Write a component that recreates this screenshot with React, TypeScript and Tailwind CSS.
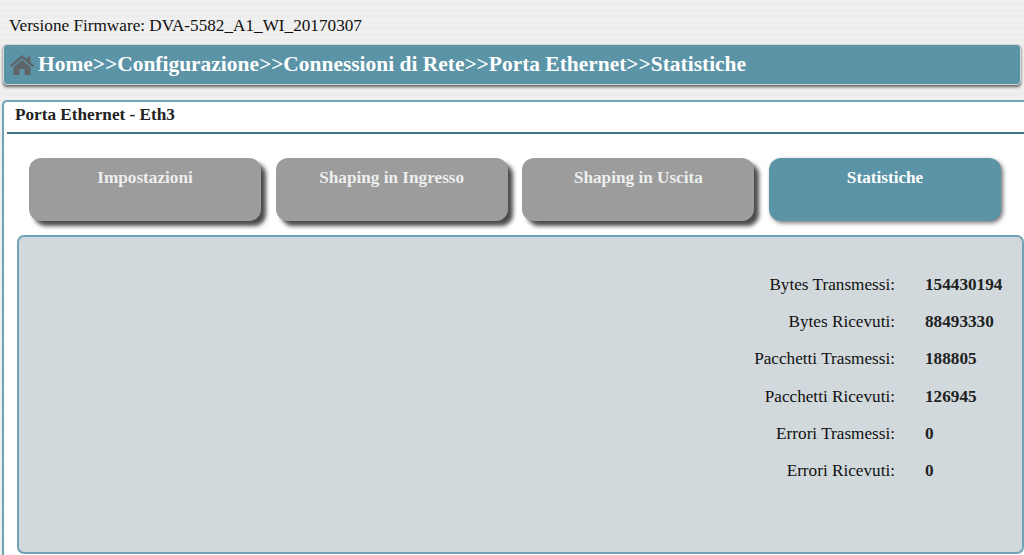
const serif = "font-['Liberation_Serif','Times_New_Roman',serif]";

const tabs = [
  { label: "Impostazioni", active: false },
  { label: "Shaping in Ingresso", active: false },
  { label: "Shaping in Uscita", active: false },
  { label: "Statistiche", active: true },
];

const stats = [
  { label: "Bytes Transmessi:", value: "154430194" },
  { label: "Bytes Ricevuti:", value: "88493330" },
  { label: "Pacchetti Trasmessi:", value: "188805" },
  { label: "Pacchetti Ricevuti:", value: "126945" },
  { label: "Errori Trasmessi:", value: "0" },
  { label: "Errori Ricevuti:", value: "0" },
];

function HomeIcon() {
  return (
    <svg viewBox="0 0 24 20" className="h-[20px] w-[24px] shrink-0 fill-[#5f6468]">
      <path d="M12 0 L0 10.2 L1.5 12 L12 3.2 L22.5 12 L24 10.2 L20.5 7.2 V1.5 H17.5 V4.6 Z" />
      <path d="M12 5 L3.5 12.2 V20 H9.5 V14 H14.5 V20 H20.5 V12.2 Z" />
    </svg>
  );
}

export default function App() {
  return (
    <div
      className={`${serif} h-[555px] w-[1024px] overflow-hidden bg-[repeating-linear-gradient(180deg,#f0f0f0_0px,#f0f0f0_3px,#ededed_3px,#ededed_6px)] text-[#111]`}
    >
      <div className="h-[44px] pl-[9px] pt-[17px] text-[17.2px] leading-[18px]">
        Versione Firmware: DVA-5582_A1_WI_20170307
      </div>
      <div className="mx-[3px] flex h-[41px] items-center gap-[4px] rounded-[4px] border border-[#d5d9db] bg-[#5b93a7] pl-[6px] shadow-[0_2px_3px_rgba(0,0,0,0.6)]">
        <HomeIcon />
        <span className="pb-[2px] text-[21.45px] leading-[26px] font-bold text-white">
          Home&gt;&gt;Configurazione&gt;&gt;Connessioni di Rete&gt;&gt;Porta Ethernet&gt;&gt;Statistiche
        </span>
      </div>
      <div className="mt-[15px] ml-[2px] h-[500px] rounded-tl-[5px] border-t-2 border-l-2 border-[#6fa3b5] bg-white pl-[3px]">
        <div className="h-[32px] border-b-2 border-[#3f7488] pl-[8px] pt-[3px] text-[17.2px] leading-[20px] font-bold text-[#222]">
          Porta Ethernet - Eth3
        </div>
        <div className="flex gap-[14.7px] pl-[22px] pt-[24px]">
          {tabs.map((tab) => (
            <div
              key={tab.label}
              className={`h-[63px] w-[232px] rounded-[12px] pt-[10px] text-center text-[17.2px] leading-[20px] font-bold ${
                tab.active
                  ? "bg-[#5b93a7] text-white shadow-[2px_2px_4px_rgba(0,0,0,0.55)]"
                  : "bg-[#9b9c9b] text-[#eeeeee] shadow-[5px_5px_4px_#4a4c4c]"
              }`}
            >
              {tab.label}
            </div>
          ))}
        </div>
        <div className="mt-[14px] ml-[10px] h-[319px] rounded-[7px] border-2 border-[#6fa3b5] bg-[#d1d9dc] pt-[38px]">
          {stats.map((row) => (
            <div key={row.label} className="flex h-[37.2px] text-[17.2px] leading-[20px]">
              <div className="w-[876px] text-right">{row.label}</div>
              <div className="ml-[30px] font-bold text-[#222]">{row.value}</div>
            </div>
          ))}
        </div>
      </div>
    </div>
  );
}
